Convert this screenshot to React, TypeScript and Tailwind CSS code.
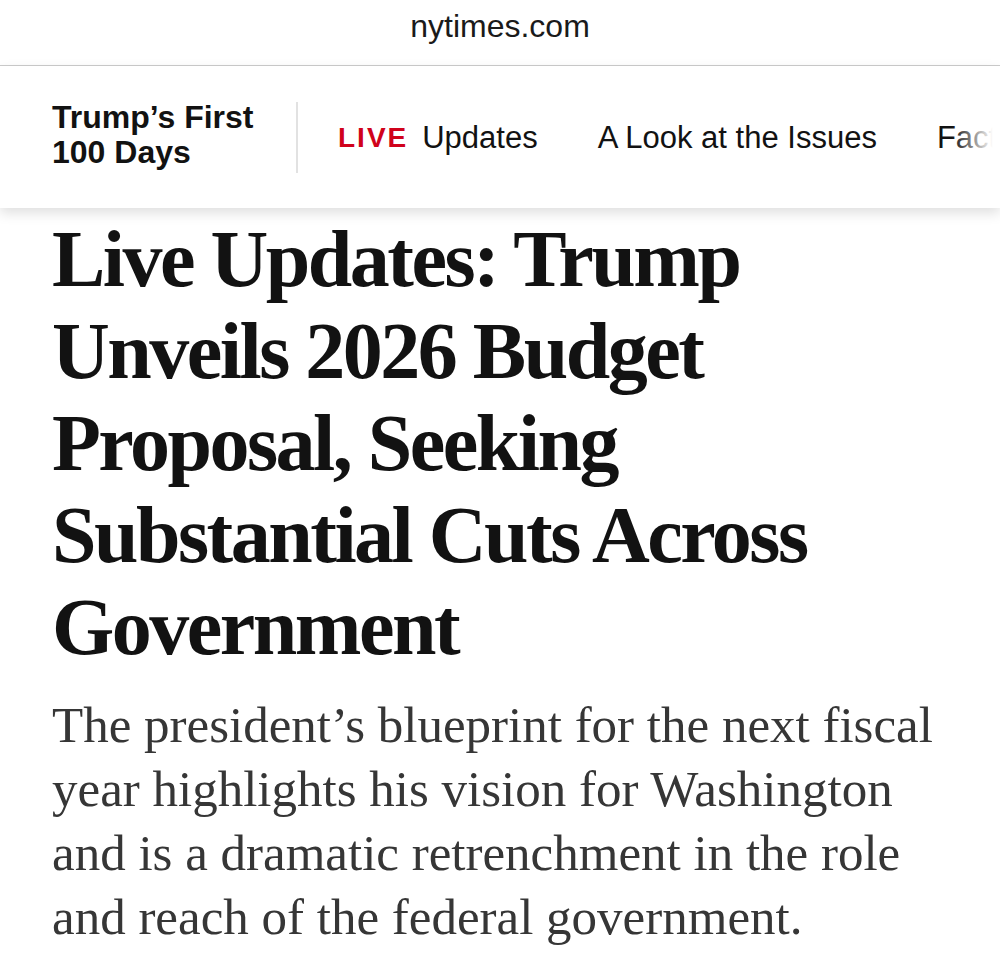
import React from "react";

export default function App() {
  return (
    <div className="w-full min-h-[968px] bg-white overflow-hidden">
      <div className="h-[66px] border-b border-[#cccccc] flex justify-center pt-[6px]">
        <span className="font-['Liberation_Sans',Arial,sans-serif] text-[32px] leading-[40px] text-[#1a1a1a]">
          nytimes.com
        </span>
      </div>

      <nav className="relative z-10 h-[142px] bg-white flex items-center pl-[52px] shadow-[0_5px_12px_rgba(0,0,0,0.13)] overflow-hidden font-['Liberation_Sans',Arial,sans-serif] text-[#121212] whitespace-nowrap">
        <div className="mb-[5px] text-[32px] leading-[35px] font-bold w-[204px] shrink-0">
          Trump’s First
          <br />
          100 Days
        </div>
        <div className="ml-[40px] w-[2px] h-[71px] bg-[#e2e2e2] shrink-0" />
        <div className="ml-[40px] mt-[2px] flex items-center gap-[60px] text-[31px] leading-[36px]">
          <div className="flex items-center">
            <span className="text-[#d0021b] font-bold text-[28px] tracking-[2px]">LIVE</span>
            <span className="ml-[14px]">Updates</span>
          </div>
          <span>A Look at the Issues</span>
          <span>Fact Checks</span>
        </div>
        <div className="absolute right-0 top-0 h-full w-[48px] bg-gradient-to-l from-white from-15% to-transparent" />
      </nav>

      <main className="px-[52px]">
        <h1 className="mt-[5px] font-['Liberation_Serif','Times_New_Roman',serif] font-bold text-[80px] leading-[92px] tracking-[-2.5px] text-[#121212]">
          Live Updates: Trump Unveils 2026 Budget Proposal, Seeking Substantial Cuts Across Government
        </h1>
        <p className="mt-[20px] font-['Liberation_Serif','Times_New_Roman',serif] text-[51px] leading-[64px] text-[#363636]">
          The president’s blueprint for the next fiscal year highlights his vision for Washington and is a dramatic retrenchment in the role and reach of the federal government.
        </p>
      </main>
    </div>
  );
}
